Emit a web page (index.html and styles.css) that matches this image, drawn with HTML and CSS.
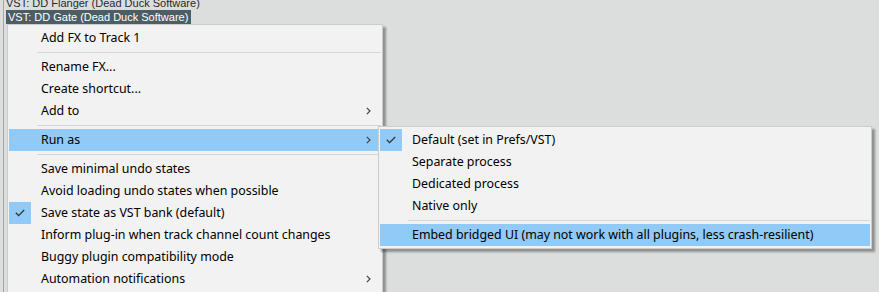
FILE: index.html
```html
<!DOCTYPE html>
<html lang="en">
<head>
    <meta charset="UTF-8">
    <title>FX menu</title>
    <link rel="stylesheet" href="styles.css">
</head>
<body>
    <div class="fx-list">
        <div class="fx-row">VST: DD Flanger (Dead Duck Software)</div>
        <div class="fx-row"><span class="fx-selected">VST: DD Gate (Dead Duck Software)</span></div>
    </div>

    <div class="menu main-menu">
        <div class="item">Add FX to Track 1</div>
        <div class="sep"></div>
        <div class="item">Rename FX...</div>
        <div class="item">Create shortcut...</div>
        <div class="item">Add to <svg class="arrow" width="5" height="8" viewBox="0 0 5 8"><polyline points="0.8,0.8 4,4 0.8,7.2" /></svg></div>
        <div class="sep"></div>
        <div class="item hover">Run as <svg class="arrow" width="5" height="8" viewBox="0 0 5 8"><polyline points="0.8,0.8 4,4 0.8,7.2" /></svg></div>
        <div class="sep"></div>
        <div class="item">Save minimal undo states</div>
        <div class="item">Avoid loading undo states when possible</div>
        <div class="item checked">
            <span class="check"><svg width="10" height="8" viewBox="0 0 10 8"><polyline points="0.8,3.8 3.6,6.6 9.2,1" /></svg></span>
            Save state as VST bank (default)
        </div>
        <div class="item">Inform plug-in when track channel count changes</div>
        <div class="item">Buggy plugin compatibility mode</div>
        <div class="item">Automation notifications <svg class="arrow" width="5" height="8" viewBox="0 0 5 8"><polyline points="0.8,0.8 4,4 0.8,7.2" /></svg></div>
    </div>

    <div class="menu sub-menu">
        <div class="item checked">
            <span class="check"><svg width="10" height="8" viewBox="0 0 10 8"><polyline points="0.8,3.8 3.6,6.6 9.2,1" /></svg></span>
            Default (set in Prefs/VST)
        </div>
        <div class="item">Separate process</div>
        <div class="item">Dedicated process</div>
        <div class="item">Native only</div>
        <div class="sep"></div>
        <div class="item hover">Embed bridged UI (may not work with all plugins, less crash-resilient)</div>
    </div>
</body>
</html>
```

FILE: styles.css
```css
body {
    margin: 0;
    width: 879px;
    height: 292px;
    overflow: hidden;
    background-color: #dcdedd;
    position: relative;
}
.fx-list {
    margin-left: 3px;
    margin-top: -4px;
    height: 300px;
    border-left: 1px solid #a6a8a8;
    font-family: "Liberation Sans", Arial, sans-serif;
    font-size: 11px;
    color: #ffffff;
}
.fx-row {
    height: 14px;
    line-height: 14px;
    padding-left: 2px;
    white-space: nowrap;
}
.fx-row:first-child {
    color: #1f2a30;
}
.fx-selected {
    display: inline-block;
    background-color: #4b5e65;
    padding: 0 3px 0 2px;
}
.menu {
    position: absolute;
    box-sizing: border-box;
    background-color: #f2f2f2;
    border: 1px solid #cccccc;
    padding: 2px 1px;
    box-shadow: 3px 3px 2px rgba(0,0,0,0.35);
    font-family: "Noto Sans", "Open Sans", sans-serif;
    font-size: 12.4px;
    color: #000000;
}
.main-menu {
    left: 7px;
    top: 24px;
    width: 376px;
    height: 280px;
}
.sub-menu {
    left: 378px;
    top: 126px;
    width: 494px;
}
.item {
    position: relative;
    height: 22px;
    line-height: 22px;
    padding-left: 32px;
    white-space: nowrap;
}
.item.hover {
    background-color: #91c9f7;
}
.check {
    position: absolute;
    left: 0;
    top: 0;
    width: 22px;
    height: 22px;
    background-color: #91c9f7;
    display: flex;
    align-items: center;
    justify-content: center;
}
.check svg polyline {
    fill: none;
    stroke: #333333;
    stroke-width: 1.3;
}
.arrow {
    position: absolute;
    right: 10px;
    top: 7px;
}
.arrow polyline {
    fill: none;
    stroke: #444444;
    stroke-width: 1.2;
}
.sep {
    height: 1px;
    margin: 3px 0 3px 28px;
    background-color: #d5d5d5;
}
```
